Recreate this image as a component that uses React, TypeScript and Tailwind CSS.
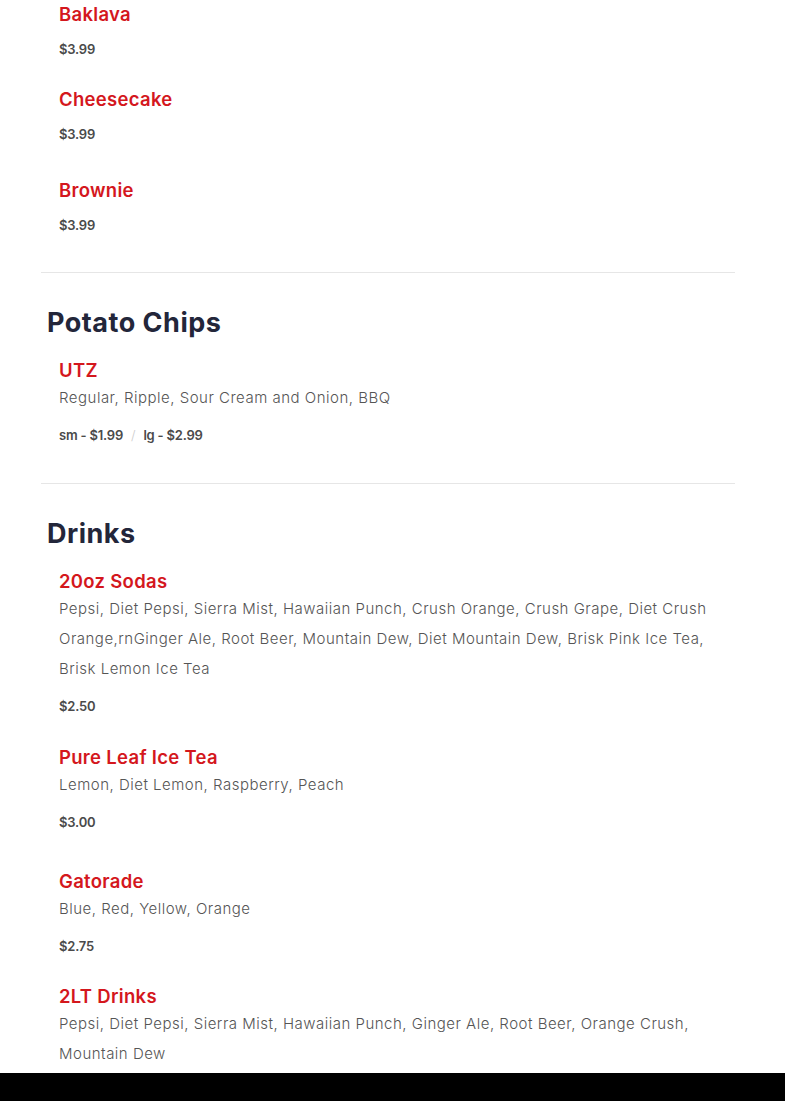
import React from "react";

type Item = { name: string; desc?: string; price?: React.ReactNode; mb?: string };

const font = { fontFamily: "Inter, 'Open Sans', sans-serif" };

function Price({ children }: { children: React.ReactNode }) {
  return (
    <div className="text-[13px] leading-[20px] font-semibold text-[#4a4a4a] tracking-[-0.2px]">
      {children}
    </div>
  );
}

function MenuItem({ item }: { item: Item }) {
  return (
    <div className={`pl-[18px] ${item.mb ?? ""}`}>
      <h3
        className={`text-[18.5px] font-semibold tracking-[0.3px] text-[#d4171d] ${
          item.desc ? "leading-[26px]" : "leading-[25px]"
        }`}
      >
        {item.name}
      </h3>
      {item.desc ? (
        <>
          <p className="text-[15px] leading-[30px] font-light tracking-[0.5px] text-[#555] pr-[24px]">{item.desc}</p>
          {item.price ? (
            <div className="mt-[12px]">
              <Price>{item.price}</Price>
            </div>
          ) : null}
        </>
      ) : (
        <div className="mt-[12px]">
          <Price>{item.price}</Price>
        </div>
      )}
    </div>
  );
}

export default function App() {
  const desserts: Item[] = [
    { name: "Baklava", price: "$3.99", mb: "mb-[28px]" },
    { name: "Cheesecake", price: "$3.99", mb: "mb-[34px]" },
    { name: "Brownie", price: "$3.99" },
  ];
  const drinks: Item[] = [
    {
      name: "20oz Sodas",
      desc: "Pepsi, Diet Pepsi, Sierra Mist, Hawaiian Punch, Crush Orange, Crush Grape, Diet Crush Orange,rnGinger Ale, Root Beer, Mountain Dew, Diet Mountain Dew, Brisk Pink Ice Tea, Brisk Lemon Ice Tea",
      price: "$2.50",
      mb: "mb-[28px]",
    },
    { name: "Pure Leaf Ice Tea", desc: "Lemon, Diet Lemon, Raspberry, Peach", price: "$3.00", mb: "mb-[36px]" },
    { name: "Gatorade", desc: "Blue, Red, Yellow, Orange", price: "$2.75", mb: "mb-[27px]" },
    {
      name: "2LT Drinks",
      desc: "Pepsi, Diet Pepsi, Sierra Mist, Hawaiian Punch, Ginger Ale, Root Beer, Orange Crush, Mountain Dew",
    },
  ];

  return (
    <div className="relative h-[1101px] overflow-hidden bg-white" style={font}>
      <div className="ml-[41px] w-[694px] pt-[2px]">
        {/* Desserts tail */}
        <section className="pb-[37px] border-b border-[#e6e6e6]">
          {desserts.map((it) => (
            <MenuItem key={it.name} item={it} />
          ))}
        </section>

        {/* Potato chips */}
        <section className="pt-[33px] pb-[38px] border-b border-[#e6e6e6]">
          <h2 className="pl-[6px] text-[27px] leading-[34px] font-bold tracking-[0.5px] text-[#23263a] mb-[18px]">
            Potato Chips
          </h2>
          <div className="pl-[18px]">
            <h3 className="text-[18.5px] leading-[25px] font-semibold tracking-[0.3px] text-[#d4171d]">UTZ</h3>
            <p className="text-[15px] leading-[30px] font-light tracking-[0.5px] text-[#555]">
              Regular, Ripple, Sour Cream and Onion, BBQ
            </p>
            <div className="mt-[12px] flex items-center text-[13px] leading-[20px] font-semibold text-[#4a4a4a] tracking-[-0.2px]">
              <span>sm - $1.99</span>
              <span className="mx-[8px] font-light text-[#ccc]">/</span>
              <span>lg - $2.99</span>
            </div>
          </div>
        </section>

        {/* Drinks */}
        <section className="pt-[33px]">
          <h2 className="pl-[6px] text-[27px] leading-[34px] font-bold tracking-[0.5px] text-[#23263a] mb-[17px]">
            Drinks
          </h2>
          {drinks.map((it) => (
            <MenuItem key={it.name} item={it} />
          ))}
        </section>
      </div>
      <div className="absolute bottom-0 left-0 right-0 h-[28px] bg-black" />
    </div>
  );
}
